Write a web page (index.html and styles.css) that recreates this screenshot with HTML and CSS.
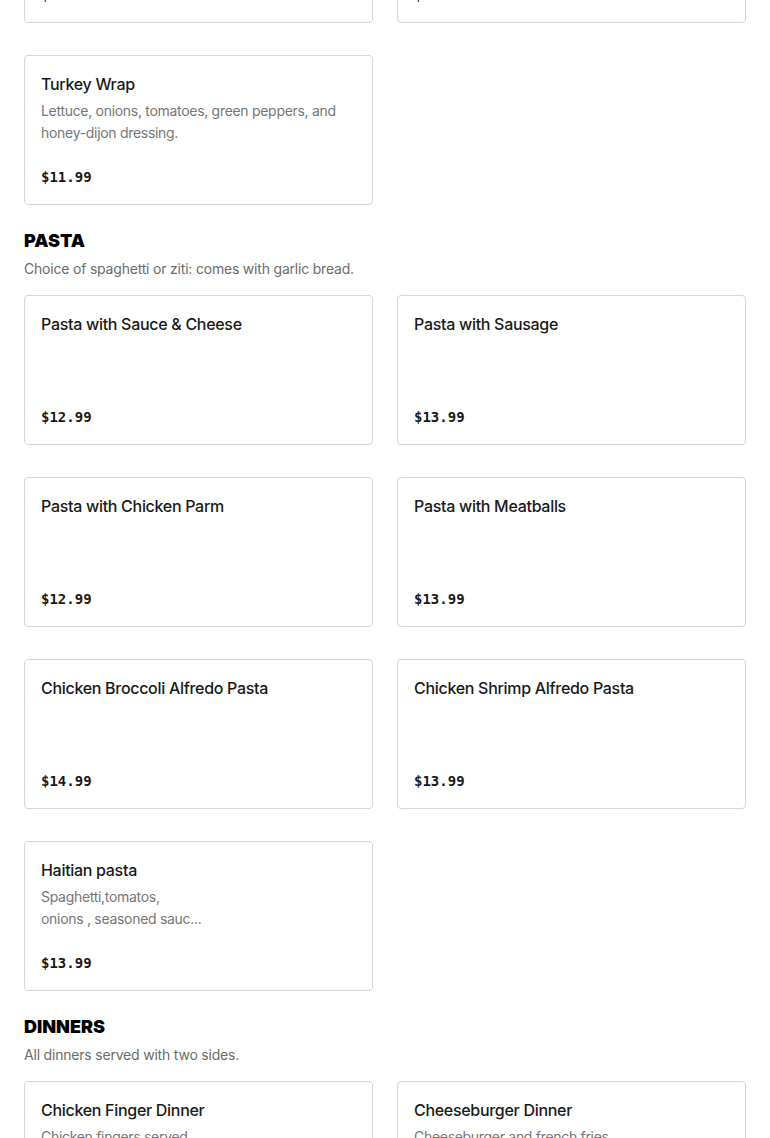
FILE: index.html
```html
<!DOCTYPE html>
<html lang="en">
<head>
    <meta charset="UTF-8">
    <meta name="viewport" content="width=device-width, initial-scale=1.0">
    <title>Menu</title>
    <link rel="stylesheet" href="styles.css">
</head>
<body>

<div class="menu">
    <!-- Wraps (scrolled past) -->
    <section class="section scrolled">
        <div class="items">
            <div class="item">
                <h3 class="item-name">Chicken Caesar Wrap</h3>
                <p class="item-desc">Grilled chicken, romaine, parmesan and caesar dressing.</p>
                <div class="item-price">$11.99</div>
            </div>
            <div class="item">
                <h3 class="item-name">Buffalo Chicken Wrap</h3>
                <p class="item-desc">Lettuce, tomatoes and blue cheese.</p>
                <div class="item-price">$11.99</div>
            </div>
            <div class="item">
                <h3 class="item-name">Turkey Wrap</h3>
                <p class="item-desc">Lettuce, onions, tomatoes, green peppers, and honey-dijon dressing.</p>
                <div class="item-price">$11.99</div>
            </div>
        </div>
    </section>

    <section class="section">
        <h2 class="section-title">PASTA</h2>
        <p class="section-desc">Choice of spaghetti or ziti: comes with garlic bread.</p>
        <div class="items">
            <div class="item">
                <h3 class="item-name">Pasta with Sauce &amp; Cheese</h3>
                <div class="item-price">$12.99</div>
            </div>
            <div class="item">
                <h3 class="item-name">Pasta with Sausage</h3>
                <div class="item-price">$13.99</div>
            </div>
            <div class="item">
                <h3 class="item-name">Pasta with Chicken Parm</h3>
                <div class="item-price">$12.99</div>
            </div>
            <div class="item">
                <h3 class="item-name">Pasta with Meatballs</h3>
                <div class="item-price">$13.99</div>
            </div>
            <div class="item">
                <h3 class="item-name">Chicken Broccoli Alfredo Pasta</h3>
                <div class="item-price">$14.99</div>
            </div>
            <div class="item">
                <h3 class="item-name">Chicken Shrimp Alfredo Pasta</h3>
                <div class="item-price">$13.99</div>
            </div>
            <div class="item">
                <h3 class="item-name">Haitian pasta</h3>
                <p class="item-desc">Spaghetti,tomatos,<br>onions , seasoned sauc...</p>
                <div class="item-price">$13.99</div>
            </div>
        </div>
    </section>

    <section class="section">
        <h2 class="section-title">DINNERS</h2>
        <p class="section-desc">All dinners served with two sides.</p>
        <div class="items">
            <div class="item">
                <h3 class="item-name">Chicken Finger Dinner</h3>
                <p class="item-desc">Chicken fingers served<br>with french fries.</p>
                <div class="item-price">$13.99</div>
            </div>
            <div class="item">
                <h3 class="item-name">Cheeseburger Dinner</h3>
                <p class="item-desc">Cheeseburger and french fries.</p>
                <div class="item-price">$12.99</div>
            </div>
        </div>
    </section>
</div>

</body>
</html>
```

FILE: styles.css
```css
body {
    margin: 0;
    background-color: #fff;
    font-family: Inter, "Liberation Sans", Arial, sans-serif;
    color: #191919;
    overflow: hidden;
}
.menu {
    padding: 0 24px;
}
.section {
    margin-bottom: 24px;
}
.section.scrolled {
    margin-top: -127px;
}
.section-title {
    margin: 0;
    font-size: 18px;
    line-height: 24px;
    font-weight: 900;
    color: #000;
}
.section-desc {
    margin: 5px 0 15px;
    font-size: 14px;
    line-height: 22px;
    letter-spacing: -0.2px;
    color: #6b6b6b;
}
.items {
    display: grid;
    grid-template-columns: repeat(2, 1fr);
    column-gap: 24px;
    row-gap: 32px;
}
.item {
    display: flex;
    flex-direction: column;
    height: 150px;
    box-sizing: border-box;
    padding: 16px 16px 15px;
    border: 1px solid #d6d6d6;
    border-radius: 4px;
}
.item-name {
    margin: 0;
    font-size: 16px;
    line-height: 24px;
    font-weight: 500;
    letter-spacing: -0.3px;
    color: #191919;
}
.item-desc {
    margin: 4px 0 0;
    font-size: 14px;
    line-height: 22px;
    letter-spacing: -0.3px;
    color: #767676;
}
.item-price {
    margin-top: auto;
    font-family: "DejaVu Sans Mono", "Liberation Mono", monospace;
    font-size: 14px;
    line-height: 24px;
    font-weight: bold;
    color: #191919;
}
```
